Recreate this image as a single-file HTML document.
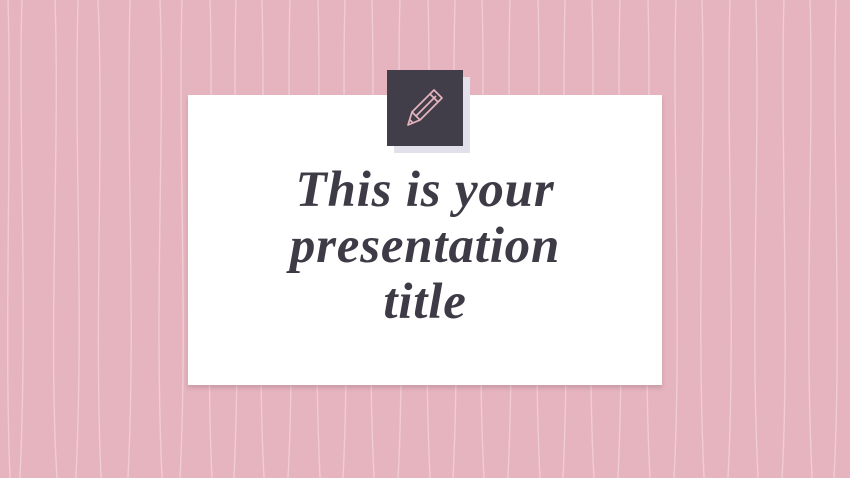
<!DOCTYPE html>
<html><head><meta charset="utf-8"><style>
html,body{margin:0;padding:0}
body{width:850px;height:478px;background:#e6b4be;position:relative;overflow:hidden}
svg.bg{position:absolute;left:0;top:0}
.card{position:absolute;left:188px;top:95px;width:474px;height:290px;background:#fff;box-shadow:0 3px 4px rgba(120,80,100,.25)}
.sq2{position:absolute;left:394px;top:77px;width:76px;height:76px;background:#e2e0ea}
.sq{position:absolute;left:387px;top:70px;width:76px;height:76px;background:#413e49}
.t{position:absolute;left:150px;top:162px;width:550px;text-align:center;font-family:"Liberation Serif",serif;font-style:italic;font-weight:bold;font-size:51px;line-height:56px;color:#3e3b46;letter-spacing:0.8px}
</style></head><body>
<svg class="bg" width="850" height="478" fill="none" stroke="#f3d3da" stroke-width="1.4" opacity="0.8">
<path d="M22 0 C18 120 28 300 20 478"/><path d="M55 0 C60 150 48 330 57 478"/><path d="M78 0 C74 160 84 300 76 478"/>
<path d="M98 0 C104 140 94 320 101 478"/><path d="M130 0 C126 170 136 310 128 478"/><path d="M160 0 C165 130 154 300 162 478"/>
<path d="M182 0 C178 150 188 320 180 478"/><path d="M210 0 C214 120 205 340 212 478"/><path d="M236 0 C232 150 242 300 234 478"/>
<path d="M262 0 C266 160 256 320 264 478"/><path d="M290 0 C286 130 296 330 288 478"/><path d="M318 0 C322 150 312 300 320 478"/>
<path d="M345 0 C341 140 351 320 343 478"/><path d="M372 0 C376 170 366 310 374 478"/><path d="M400 0 C396 130 406 340 398 478"/>
<path d="M428 0 C432 150 422 300 430 478"/><path d="M455 0 C451 160 461 320 453 478"/><path d="M482 0 C486 130 476 330 484 478"/>
<path d="M510 0 C506 150 516 300 508 478"/><path d="M538 0 C542 140 532 320 540 478"/><path d="M565 0 C561 170 571 310 563 478"/>
<path d="M592 0 C596 130 586 340 594 478"/><path d="M620 0 C616 150 626 300 618 478"/><path d="M648 0 C652 160 642 320 650 478"/>
<path d="M676 0 C672 130 682 330 674 478"/><path d="M702 0 C706 150 696 300 704 478"/><path d="M730 0 C726 140 736 320 728 478"/>
<path d="M756 0 C760 170 750 310 758 478"/><path d="M784 0 C780 130 790 340 782 478"/><path d="M810 0 C814 150 804 300 812 478"/>
<path d="M836 0 C832 160 842 320 834 478"/><path d="M8 0 C12 140 4 330 10 478"/>
</svg>
<div class="card"></div>
<div class="sq2"></div>
<div class="sq">
<svg width="76" height="76" viewBox="0 0 76 76" fill="none" stroke="#e6b4be" stroke-width="1.7" stroke-linejoin="round">
<path d="M47 20 L55 28 L33 50 L21 55 L25 42 Z"/><path d="M43 24 L51 32"/><path d="M25 42 L33 50"/><path d="M29 46 L49 26"/><path d="M23 50 L26 53"/>
</svg></div>
<div class="t">This is your<br>presentation<br>title</div>
</body></html>
